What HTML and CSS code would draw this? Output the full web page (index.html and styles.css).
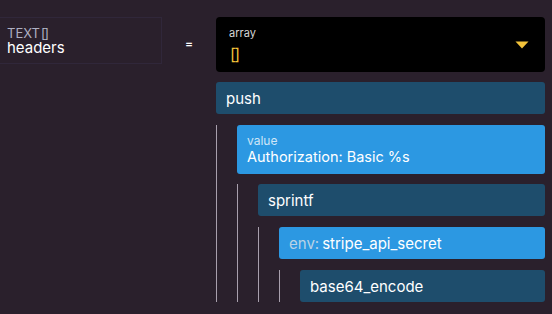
FILE: index.html
```html
<!DOCTYPE html>
<html>
<head>
<meta charset="utf-8">
<link rel="stylesheet" href="styles.css">
</head>
<body>
<div class="row">
  <div class="var">
    <div class="type">TEXT<span class="tofu">[]</span></div>
    <div class="name">headers</div>
  </div>
  <div class="eq">=</div>
  <div class="expr">
    <div class="select">
      <div class="select-body">
        <div class="label">array</div>
        <div class="val"><span class="tofu">[]</span></div>
      </div>
      <svg class="caret" width="14" height="8" viewBox="0 0 14 8"><path d="M0.5 0.5 H13.5 L7 7.5 Z" fill="#f2c23a"/></svg>
    </div>
    <div class="bar dark">push</div>
    <div class="children">
      <div class="bar light tall">
        <div class="lb">value</div>
        <div>Authorization: Basic %s</div>
      </div>
      <div class="children">
        <div class="bar dark">sprintf</div>
        <div class="children">
          <div class="bar light"><span class="env">env:</span>stripe_api_secret</div>
          <div class="children">
            <div class="bar dark">base64_encode</div>
          </div>
        </div>
      </div>
    </div>
  </div>
</div>
</body>
</html>
```
FILE: styles.css
```css
html, body {
  margin: 0;
  padding: 0;
  background: #2a202c;
  font-family: Inter, "Noto Sans", sans-serif;
  color: #ffffff;
  overflow: hidden;
}
.row {
  display: grid;
  grid-template-columns: 162px 54px 329px;
  padding-top: 17px;
  align-items: start;
}
.var {
  border: 1px solid #30273a;
  border-left: none;
  padding: 8px 0 0 7px;
  box-sizing: border-box;
  height: 47px;
}
.type {
  font-size: 13px;
  line-height: 14px;
  color: #aeb0c2;
}
.name {
  font-size: 15px;
  line-height: 16px;
  color: #ffffff;
}
.tofu {
  letter-spacing: -1.5px;
  margin-left: 1px;
}
.eq {
  font-size: 12px;
  line-height: 12px;
  padding-top: 21px;
  padding-left: 23px;
  font-weight: 600;
}
.select {
  background: #000000;
  border-radius: 4px;
  height: 55px;
  display: flex;
  align-items: center;
  padding: 0 16px 0 13px;
  box-sizing: border-box;
}
.select-body {
  flex: 1;
  padding-top: 2px;
}
.label {
  font-size: 11px;
  line-height: 13px;
  color: #d6d6d6;
}
.val {
  font-size: 16px;
  line-height: 20px;
  color: #f2c23a;
  margin-top: 4px;
}
.caret {
  display: block;
  margin-top: 1px;
}
.bar {
  height: 32px;
  border-radius: 3px;
  box-sizing: border-box;
  padding: 0 10px;
  display: flex;
  align-items: center;
  font-size: 15px;
}
.dark {
  background: #1e4d6c;
}
.expr > .dark {
  margin-top: 10px;
}
.light {
  background: #2c98e2;
}
.tall {
  height: 49px;
  flex-direction: column;
  align-items: flex-start;
  justify-content: center;
  font-size: 14.5px;
  line-height: 18px;
}
.lb {
  font-size: 12px;
  line-height: 14px;
  color: #cfe6f7;
}
.env {
  color: #b9d3e6;
  margin-right: 3px;
}
.children {
  margin-top: 11px;
  border-left: 1px solid #a89fad;
  padding-left: 20px;
}
.children > .tall + .children {
  margin-top: 10px;
}
```
